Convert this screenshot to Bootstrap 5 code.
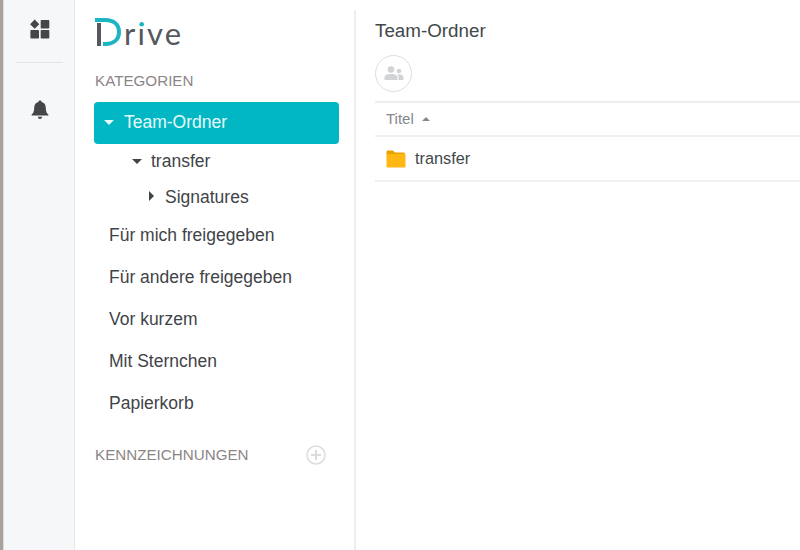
<!DOCTYPE html>
<html lang="de"><head><meta charset="utf-8"><title>Drive</title>
<link href="https://cdn.jsdelivr.net/npm/bootstrap@5.3.0/dist/css/bootstrap.min.css" rel="stylesheet">
<style>
html,body{height:550px;overflow:hidden;background:#fff;font-family:"Liberation Sans",Arial,sans-serif;color:#444}
.shell{height:550px}
.edge{width:4px;background:#a9a19b;border-right:1px solid #ddd}
.rail{width:71px;background:#f6f7f9;border-right:1px solid #e8e9eb}
.rail-top{height:63px;margin:0 11px 0 12px;border-bottom:1px solid #e2e3e5;padding-top:18px;padding-left:1px}
.rail-bell{padding-top:37px;padding-left:1px}
.side{width:281px;border-right:2px solid #eeeeee;padding:0 15px 0 19px;flex:none;margin-top:10px}
.logo{height:62px;padding-top:3px;font-size:0}
.sec-title{font-size:15.2px;color:#8b8686;line-height:18px;margin-left:1px}
.tree-active{height:42px;background:#00b7c3;border-radius:4px;color:#e8fbfc;font-size:17.5px;margin-top:12px;padding:0 0 2px 10px;gap:10px}
.tree-item{font-size:17.5px;color:#3f4448;line-height:20px}
.t1{height:36px;padding-left:38px;padding-top:7px;gap:9px}
.t2{height:34px;padding-left:55px;padding-top:7px;gap:11px}
.plain{height:42px;padding-left:15px;padding-top:11px}
.tw{display:inline-block;flex:none}
.dn{width:0;height:0;border-left:5px solid transparent;border-right:5px solid transparent;border-top:5px solid currentColor}
.rt{width:0;height:0;border-top:5px solid transparent;border-bottom:5px solid transparent;border-left:5px solid #3f4448}
.tag-head{margin-top:21px;padding-right:13px}
.main-pane{flex:1;min-width:0;padding-left:19px}
.pane-title{font-size:18.8px;color:#41484a;line-height:22px;padding-top:20px}
.avatar{width:37px;height:37px;border:1px solid #dedede;border-radius:50%;margin-top:13px;margin-bottom:9px}
.head-row{height:36px;border-top:2px solid #eeeeee;border-bottom:2px solid #f0f0f0;font-size:15px;color:#85888a;padding-left:11px}
.body-row{height:45px;border-bottom:2px solid #f0f0f0;font-size:16.3px;color:#41484a;padding-left:11px;gap:9px}
.up{width:0;height:0;border-left:4px solid transparent;border-right:4px solid transparent;border-bottom:4px solid #85888a}
</style></head><body>
<div class="shell d-flex">
<div class="edge"></div>
<div class="rail flex-none">
<div class="rail-top d-flex justify-content-center">
<svg width="22" height="22" viewBox="0 0 22 22" fill="#44474a"><path d="M5.7 1.6 10.300 6.200 5.700 10.800 1.100 6.200Z"/><rect x="11.700" y="2" width="8.600" height="8.600" rx=".8"/><rect x="1.400" y="12" width="8.600" height="8.600" rx=".8"/><rect x="11.700" y="12" width="8.600" height="8.600" rx=".8"/></svg>
</div>
<div class="rail-bell d-flex justify-content-center">
<svg width="18" height="20" viewBox="0 0 18 20" fill="#44474a"><path d="M9 0.5c1 0 1.600.7 1.600 1.600 2.800.7 4.200 3 4.200 5.800 0 3.600 1 5.300 2.600 6.600v1H.6v-1c1.600-1.300 2.600-3 2.600-6.600 0-2.800 1.400-5.100 4.200-5.800C7.400 1.200 8 .5 9 .5Z"/><path d="M6.800 16.800h4.400c0 1.200-1 2.200-2.200 2.200s-2.200-1-2.200-2.200Z"/></svg>
</div>
</div>
<div class="side">
<div class="logo">
<svg width="100" height="40" viewBox="0 0 100 40"><rect x="3" y="10" width="4" height="23" fill="#55585c"/><path d="M1 7H11C20 7 25 11.500 25 19C25 26.500 20 31 11 31H9" fill="none" stroke="#1cb5c4" stroke-width="4"/><text x="30" y="32" font-family="Lato,'Liberation Sans',sans-serif" font-size="31" textLength="57" lengthAdjust="spacing" fill="#55585c">rıve</text><circle cx="47.700" cy="11.300" r="2.300" fill="#1cb5c4"/></svg>
</div>
<div class="sec-title">KATEGORIEN</div>
<div class="tree-active d-flex align-items-center"><span class="tw dn"></span><span>Team-Ordner</span></div>
<div class="tree-item t1 d-flex"><span class="tw dn mt-2"></span><span>transfer</span></div>
<div class="tree-item t2 d-flex"><span class="tw rt mt-1"></span><span>Signatures</span></div>
<div class="tree-item plain">Für mich freigegeben</div>
<div class="tree-item plain">Für andere freigegeben</div>
<div class="tree-item plain">Vor kurzem</div>
<div class="tree-item plain">Mit Sternchen</div>
<div class="tree-item plain">Papierkorb</div>
<div class="tag-head d-flex justify-content-between align-items-center"><span class="sec-title">KENNZEICHNUNGEN</span>
<svg width="20" height="20" viewBox="0 0 20 20" fill="none" stroke="#dcdcdc"><circle cx="10" cy="10" r="9" stroke-width="1.500"/><path d="M10 5v10M5 10h10" stroke-width="2"/></svg></div>
</div>
<div class="main-pane">
<div class="pane-title">Team-Ordner</div>
<div class="avatar d-flex align-items-center justify-content-center">
<svg width="20" height="15" viewBox="0 0 20 15" fill="#d2d3d5"><circle cx="7" cy="3.500" r="3.300"/><path d="M.5 14v-2.500C.5 9 3.500 8 7 8s6.500 1 6.500 3.500V14Z"/><circle cx="15" cy="5" r="2.300"/><path d="M14.500 14v-3c0-1-.5-2-1.300-2.500 3-.5 6.300.4 6.300 2.800V14Z"/></svg>
</div>
<div class="head-row d-flex align-items-center gap-2"><span>Titel</span><span class="tw up"></span></div>
<div class="body-row d-flex align-items-center">
<svg width="20" height="18" viewBox="0 0 20 18"><path d="M.5 2c0-1 .7-1.500 1.500-1.500h5l2 2h8.500c1 0 1.500.6 1.500 1.500v1H.5Z" fill="#e9a300"/><rect x=".5" y="4" width="19" height="13.500" rx="1.200" fill="#ffb714"/></svg>
<span>transfer</span></div>
</div>
</div>
<script src="https://cdn.jsdelivr.net/npm/bootstrap@5.3.0/dist/js/bootstrap.bundle.min.js"></script>
</body></html>
